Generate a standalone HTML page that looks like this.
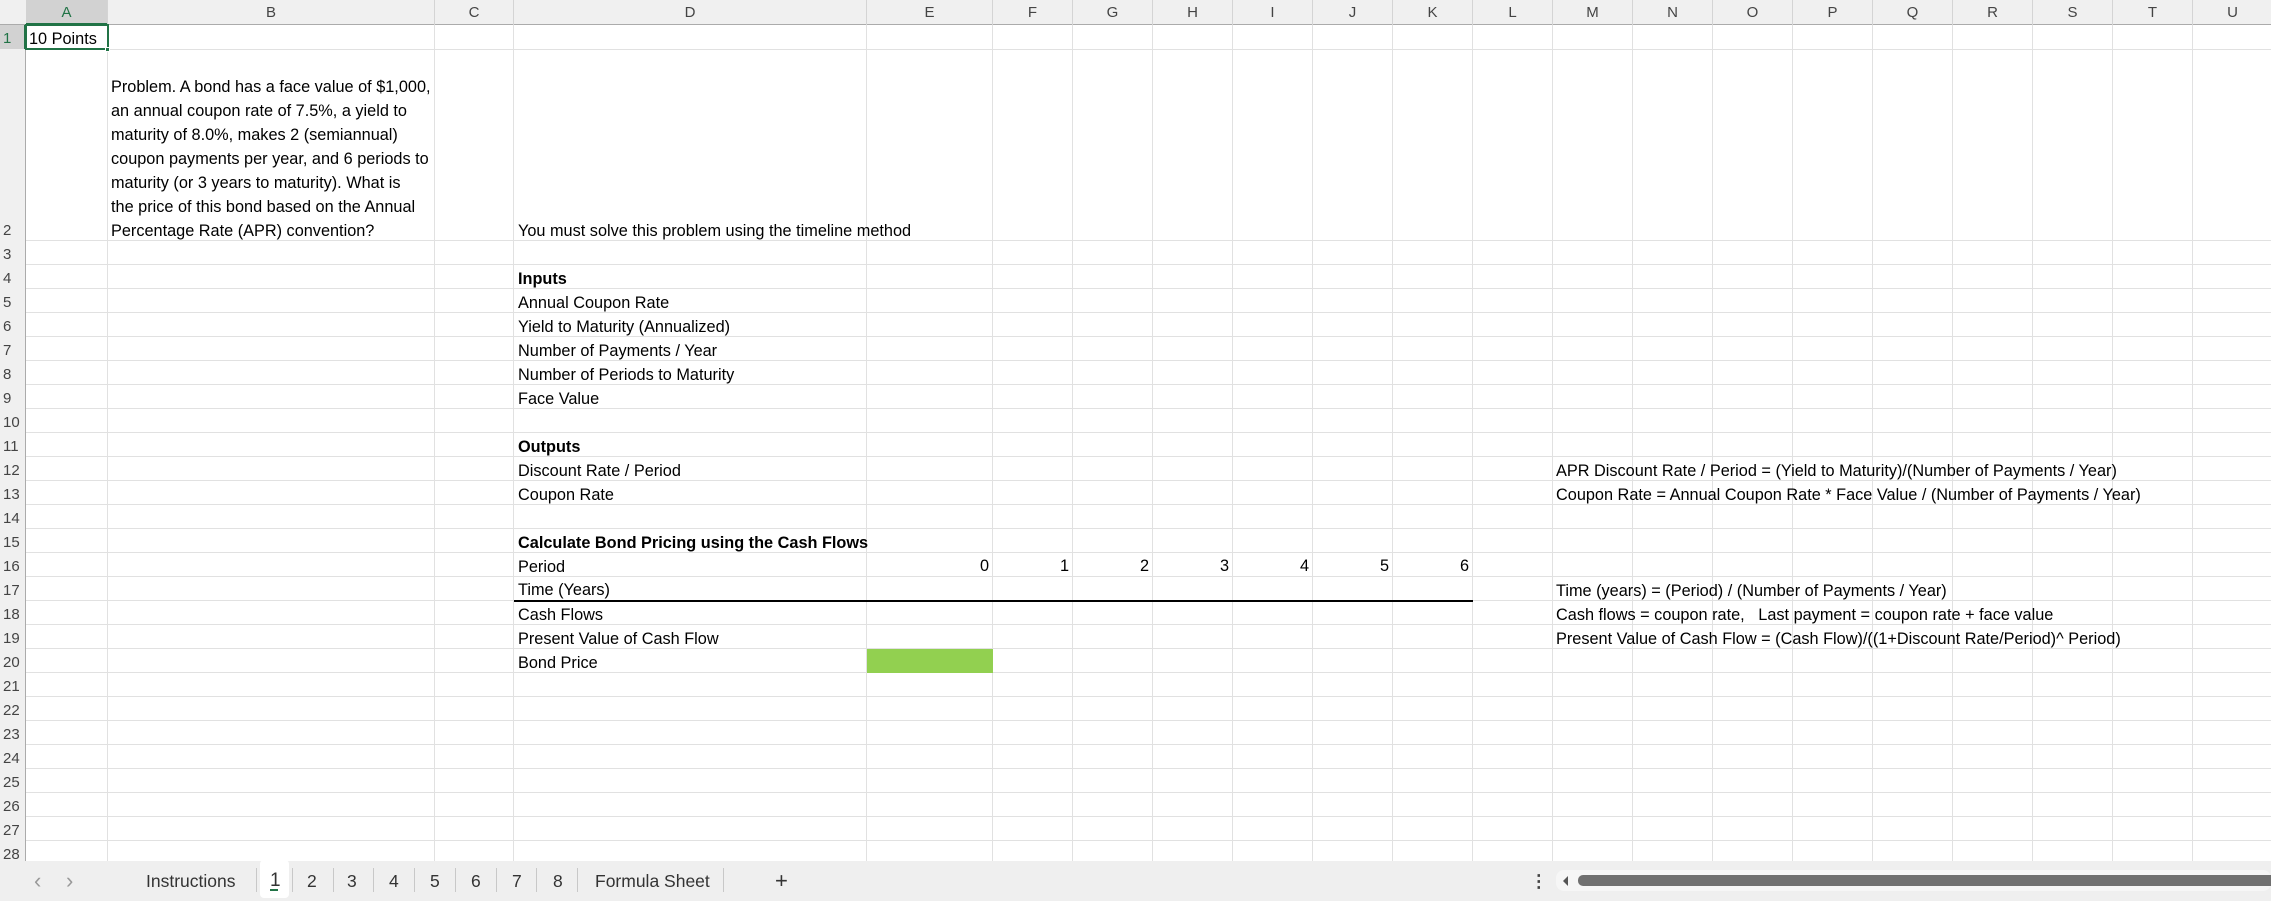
<!DOCTYPE html>
<html><head><meta charset="utf-8"><style>
*{margin:0;padding:0;box-sizing:border-box}
body{width:2271px;height:901px;overflow:hidden;background:#fff;font-family:"Liberation Sans",sans-serif;font-size:16.3px;color:#000;position:relative}
.v{position:absolute;top:25px;height:836px;width:1px;background:#e1e1e1}
.h{position:absolute;left:26px;width:2245px;height:1px;background:#e1e1e1}
.ch{position:absolute;top:0;height:25px;text-align:center;line-height:25px;color:#444;font-size:15px;border-right:1px solid #d4d4d4}
.rh{position:absolute;left:0;width:26px;padding-left:3px;color:#444;font-size:15px;height:24px;line-height:28px}
.t{position:absolute;white-space:nowrap;line-height:24px}
.n{position:absolute;width:76px;text-align:right;line-height:24px;top:554px}
.tab{position:absolute;top:861px;line-height:40px;font-size:17.5px;color:#333}
.sep{position:absolute;top:868px;width:1px;height:24px;background:#c8c8c8}
</style></head><body>
<div style="position:absolute;left:0;top:0;width:2271px;height:25px;background:#f0f0f0;border-bottom:1px solid #ababab"></div>
<div style="position:absolute;left:0;top:25px;width:26px;height:836px;background:#f0f0f0;border-right:1px solid #ababab"></div>
<div style="position:absolute;left:26px;top:0;width:82px;height:25px;background:#d2d2d2;border-bottom:2px solid #217346"></div>
<div style="position:absolute;left:0;top:25px;width:26px;height:24px;background:#d2d2d2;border-right:2px solid #217346"></div>
<div class="ch" style="left:26px;width:82px;color:#217346">A</div>
<div class="ch" style="left:108px;width:327px">B</div>
<div class="ch" style="left:435px;width:79px">C</div>
<div class="ch" style="left:514px;width:353px">D</div>
<div class="ch" style="left:867px;width:126px">E</div>
<div class="ch" style="left:993px;width:80px">F</div>
<div class="ch" style="left:1073px;width:80px">G</div>
<div class="ch" style="left:1153px;width:80px">H</div>
<div class="ch" style="left:1233px;width:80px">I</div>
<div class="ch" style="left:1313px;width:80px">J</div>
<div class="ch" style="left:1393px;width:80px">K</div>
<div class="ch" style="left:1473px;width:80px">L</div>
<div class="ch" style="left:1553px;width:80px">M</div>
<div class="ch" style="left:1633px;width:80px">N</div>
<div class="ch" style="left:1713px;width:80px">O</div>
<div class="ch" style="left:1793px;width:80px">P</div>
<div class="ch" style="left:1873px;width:80px">Q</div>
<div class="ch" style="left:1953px;width:80px">R</div>
<div class="ch" style="left:2033px;width:80px">S</div>
<div class="ch" style="left:2113px;width:80px">T</div>
<div class="ch" style="left:2193px;width:80px">U</div>
<div class="v" style="left:107px"></div><div class="v" style="left:434px"></div><div class="v" style="left:513px"></div><div class="v" style="left:866px"></div><div class="v" style="left:992px"></div><div class="v" style="left:1072px"></div><div class="v" style="left:1152px"></div><div class="v" style="left:1232px"></div><div class="v" style="left:1312px"></div><div class="v" style="left:1392px"></div><div class="v" style="left:1472px"></div><div class="v" style="left:1552px"></div><div class="v" style="left:1632px"></div><div class="v" style="left:1712px"></div><div class="v" style="left:1792px"></div><div class="v" style="left:1872px"></div><div class="v" style="left:1952px"></div><div class="v" style="left:2032px"></div><div class="v" style="left:2112px"></div><div class="v" style="left:2192px"></div>
<div class="h" style="top:49px"></div><div class="h" style="top:240px"></div>
<div class="h" style="top:264px"></div><div class="h" style="top:288px"></div><div class="h" style="top:312px"></div><div class="h" style="top:336px"></div><div class="h" style="top:360px"></div><div class="h" style="top:384px"></div><div class="h" style="top:408px"></div><div class="h" style="top:432px"></div><div class="h" style="top:456px"></div><div class="h" style="top:480px"></div><div class="h" style="top:504px"></div><div class="h" style="top:528px"></div><div class="h" style="top:552px"></div><div class="h" style="top:576px"></div><div class="h" style="top:600px"></div><div class="h" style="top:624px"></div><div class="h" style="top:648px"></div><div class="h" style="top:672px"></div><div class="h" style="top:696px"></div><div class="h" style="top:720px"></div><div class="h" style="top:744px"></div><div class="h" style="top:768px"></div><div class="h" style="top:792px"></div><div class="h" style="top:816px"></div><div class="h" style="top:840px"></div>
<div class="rh" style="top:25px;color:#217346">1</div>
<div class="rh" style="top:217px">2</div>
<div class="rh" style="top:241px">3</div><div class="rh" style="top:265px">4</div><div class="rh" style="top:289px">5</div><div class="rh" style="top:313px">6</div><div class="rh" style="top:337px">7</div><div class="rh" style="top:361px">8</div><div class="rh" style="top:385px">9</div><div class="rh" style="top:409px">10</div><div class="rh" style="top:433px">11</div><div class="rh" style="top:457px">12</div><div class="rh" style="top:481px">13</div><div class="rh" style="top:505px">14</div><div class="rh" style="top:529px">15</div><div class="rh" style="top:553px">16</div><div class="rh" style="top:577px">17</div><div class="rh" style="top:601px">18</div><div class="rh" style="top:625px">19</div><div class="rh" style="top:649px">20</div><div class="rh" style="top:673px">21</div><div class="rh" style="top:697px">22</div><div class="rh" style="top:721px">23</div><div class="rh" style="top:745px">24</div><div class="rh" style="top:769px">25</div><div class="rh" style="top:793px">26</div><div class="rh" style="top:817px">27</div><div class="rh" style="top:841px">28</div>
<div style="position:absolute;left:25px;top:24px;width:84px;height:26px;border:2px solid #217346"></div>
<div style="position:absolute;left:105px;top:47px;width:5px;height:5px;background:#217346;border:1px solid #fff"></div>
<div class="t" style="left:29px;top:27px">10 Points</div>
<div class="t" style="left:111px;top:75px;line-height:24px">Problem. A bond has a face value of $1,000,<br>an annual coupon rate of 7.5%, a yield to<br>maturity of 8.0%, makes 2 (semiannual)<br>coupon payments per year, and 6 periods to<br>maturity (or 3 years to maturity). What is<br>the price of this bond based on the Annual<br>Percentage Rate (APR) convention?</div>
<div class="t" style="left:518px;top:219px">You must solve this problem using the timeline method</div>
<div class="t" style="left:518px;top:267px;font-weight:bold">Inputs</div>
<div class="t" style="left:518px;top:291px">Annual Coupon Rate</div>
<div class="t" style="left:518px;top:315px">Yield to Maturity (Annualized)</div>
<div class="t" style="left:518px;top:339px">Number of Payments / Year</div>
<div class="t" style="left:518px;top:363px">Number of Periods to Maturity</div>
<div class="t" style="left:518px;top:387px">Face Value</div>
<div class="t" style="left:518px;top:435px;font-weight:bold">Outputs</div>
<div class="t" style="left:518px;top:459px">Discount Rate / Period</div>
<div class="t" style="left:518px;top:483px">Coupon Rate</div>
<div class="t" style="left:518px;top:531px;font-weight:bold">Calculate Bond Pricing using the Cash Flows</div>
<div class="t" style="left:518px;top:555px">Period</div>
<div class="t" style="left:518px;top:578px">Time (Years)</div>
<div style="position:absolute;left:514px;top:600px;width:959px;height:2px;background:#000"></div>
<div class="t" style="left:518px;top:603px">Cash Flows</div>
<div class="t" style="left:518px;top:627px">Present Value of Cash Flow</div>
<div class="t" style="left:518px;top:651px">Bond Price</div>
<div style="position:absolute;left:867px;top:649px;width:126px;height:24px;background:#92d050"></div>
<div class="n" style="left:913px">0</div><div class="n" style="left:993px">1</div><div class="n" style="left:1073px">2</div><div class="n" style="left:1153px">3</div><div class="n" style="left:1233px">4</div><div class="n" style="left:1313px">5</div><div class="n" style="left:1393px">6</div>
<div class="t" style="left:1556px;top:459px">APR Discount Rate / Period = (Yield to Maturity)/(Number of Payments / Year)</div>
<div class="t" style="left:1556px;top:483px">Coupon Rate = Annual Coupon Rate * Face Value / (Number of Payments / Year)</div>
<div class="t" style="left:1556px;top:579px">Time (years) = (Period) / (Number of Payments / Year)</div>
<div class="t" style="left:1556px;top:603px">Cash flows = coupon rate,&nbsp;&nbsp; Last payment = coupon rate + face value</div>
<div class="t" style="left:1556px;top:627px">Present Value of Cash Flow = (Cash Flow)/((1+Discount Rate/Period)^ Period)</div>
<div style="position:absolute;left:0;top:861px;width:2271px;height:40px;background:#efefef"></div>
<div class="tab" style="left:34px;color:#999;font-size:22px">&#x2039;</div>
<div class="tab" style="left:66px;color:#999;font-size:22px">&#x203A;</div>
<div class="tab" style="left:146px">Instructions</div>
<div class="sep" style="left:256px"></div>
<div style="position:absolute;left:260px;top:860px;width:29px;height:38px;background:#fff;border-radius:4px"></div>
<div class="tab" style="left:270px;font-size:19px">1</div>
<div style="position:absolute;left:270px;top:889px;width:8px;height:2px;background:#217346"></div>
<div class="sep" style="left:292px"></div>
<div class="tab" style="left:307px">2</div><div class="sep" style="left:333px"></div>
<div class="tab" style="left:347px">3</div><div class="sep" style="left:373px"></div>
<div class="tab" style="left:389px">4</div><div class="sep" style="left:414px"></div>
<div class="tab" style="left:430px">5</div><div class="sep" style="left:455px"></div>
<div class="tab" style="left:471px">6</div><div class="sep" style="left:496px"></div>
<div class="tab" style="left:512px">7</div><div class="sep" style="left:536px"></div>
<div class="tab" style="left:553px">8</div><div class="sep" style="left:577px"></div>
<div class="tab" style="left:595px">Formula Sheet</div><div class="sep" style="left:723px"></div>
<div class="tab" style="left:775px;font-size:22px">+</div>
<div class="tab" style="left:1530px;font-weight:bold;color:#444">&#x22EE;</div>
<div style="position:absolute;left:1556px;top:870px;width:715px;height:21px;background:#f6f6f6;border-radius:8px"></div>
<div style="position:absolute;left:1563px;top:876px;width:0;height:0;border-top:5px solid transparent;border-bottom:5px solid transparent;border-right:5px solid #555"></div>
<div style="position:absolute;left:1578px;top:875px;width:693px;height:11px;background:#707070;border-radius:5px 0 0 5px"></div>
</body></html>
